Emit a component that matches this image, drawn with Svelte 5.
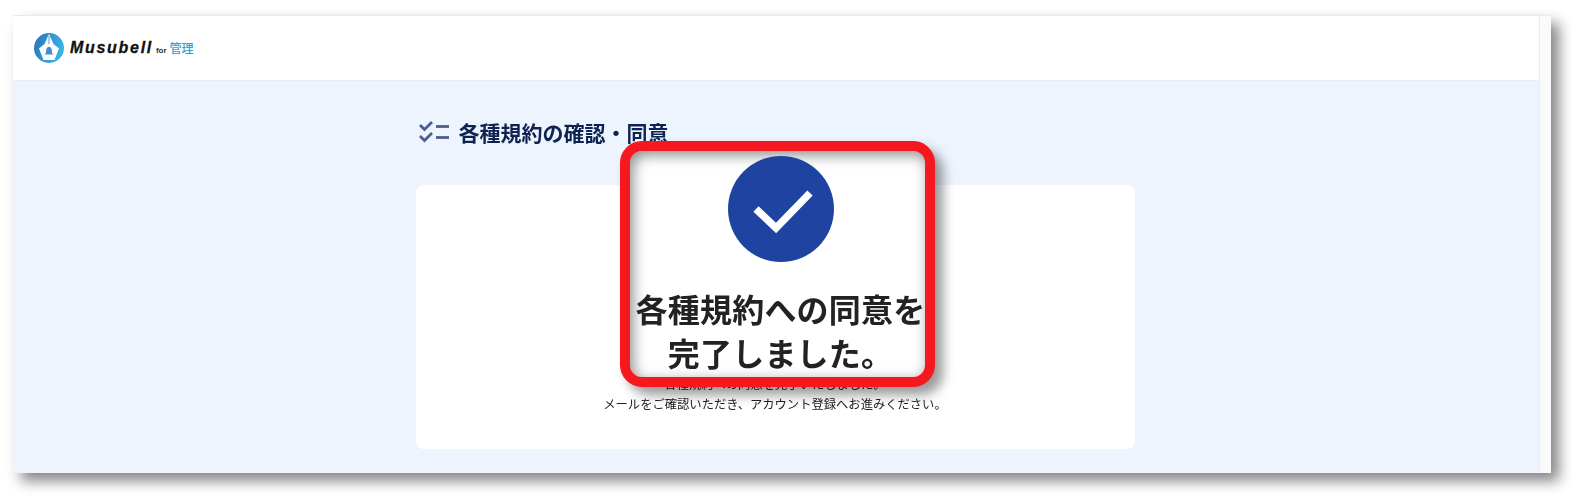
<script>
  const title = '各種規約の確認・同意';
</script>

<div class="stage">
  <div class="window">
    <div class="page">
      <header class="topbar">
        <svg class="logo" width="30" height="30" viewBox="0 0 30 30" aria-hidden="true">
          <defs>
            <linearGradient id="lg" x1="0" y1="0" x2="1" y2="0.3">
              <stop offset="0" stop-color="#2a72b8" />
              <stop offset="1" stop-color="#35b4e6" />
            </linearGradient>
          </defs>
          <circle cx="15" cy="15" r="15" fill="url(#lg)" />
          <path d="M15 1 L19.5 11 L25 15.5 L20.5 27 L9.5 27 L5 15.5 L10.5 11 Z" fill="#fff" />
          <path d="M15 3 L15 11" stroke="#3a8fd0" stroke-width="0.9" />
          <path d="M12 20 C12 15.5 13 14 15 14 C17 14 18 15.5 18 20 L19.5 21.5 L10.5 21.5 Z" fill="#3a8fd0" />
        </svg>
        <span class="brand">Musubell</span><span class="for">for</span><span class="kanri">管理</span>
      </header>
      <main class="content">
        <div class="column">
          <h1 class="title">
            <svg width="31" height="24" viewBox="0 0 31 24" aria-hidden="true">
              <g fill="none" stroke="#4a5d8c" stroke-width="2.8">
                <path d="M1 5 L5.5 9.5 L13 2" />
                <path d="M1 16 L5.5 20.5 L13 13" />
                <path d="M17 6.5 H30" />
                <path d="M17 17.5 H30" />
              </g>
            </svg>
            <span>{title}</span>
          </h1>
          <section class="card">
            <p>各種規約への同意を完了いたしました。</p>
            <p>メールをご確認いただき、アカウント登録へお進みください。</p>
          </section>
        </div>
      </main>
    </div>
    <div class="scrollbar"></div>
  </div>

  <div class="callout">
    <svg class="badge" width="106" height="106" viewBox="0 0 106 106" aria-hidden="true">
      <circle cx="53" cy="53" r="53" fill="#1f43a0" />
      <path d="M28 53 L48 72 L82 37" fill="none" stroke="#fff" stroke-width="7.5" />
    </svg>
    <div class="callout-text">各種規約への同意を<br />完了しました。</div>
  </div>
</div>

<style>
  :global(body) {
    margin: 0;
    background: #fff;
    font-family: "Noto Sans CJK JP", "Noto Sans", sans-serif;
  }
  .stage {
    position: relative;
    width: 1585px;
    height: 504px;
    overflow: hidden;
    padding: 15px 34px 31px 13px;
    box-sizing: border-box;
    filter: blur(0.4px);
  }
  .window {
    display: flex;
    height: 100%;
    box-shadow: 8px 8px 13px rgba(0, 0, 0, 0.48);
    border-top: 1px solid #eaeaea;
    box-sizing: border-box;
    background: #fafafa;
  }
  .page {
    flex: 1;
    display: flex;
    flex-direction: column;
    min-width: 0;
  }
  .scrollbar {
    width: 12px;
    background: #fafafa;
    border-left: 1px solid #eaeaea;
    box-sizing: border-box;
  }
  .topbar {
    height: 65px;
    flex: none;
    box-sizing: border-box;
    background: #fff;
    display: flex;
    align-items: center;
    padding-left: 21px;
    border-bottom: 1px solid #e8eef5;
  }
  .logo { margin-right: 6px; }
  .brand {
    font-family: "Liberation Sans", sans-serif;
    font-style: italic;
    font-weight: 700;
    font-size: 16px;
    letter-spacing: 1.7px;
    color: #111;
    -webkit-text-stroke: 0.3px #111;
  }
  .for {
    font-family: "Liberation Sans", sans-serif;
    font-size: 8px;
    font-weight: 700;
    color: #333;
    margin: 4px 3px 0 3px;
  }
  .kanri {
    font-size: 12px;
    font-weight: 500;
    color: #2f9fdc;
    margin-bottom: 2px;
  }
  .content {
    flex: 1;
    background: #edf4fe;
    display: flex;
    justify-content: center;
    padding-right: 2px;
  }
  .column {
    width: 719px;
    display: flex;
    flex-direction: column;
  }
  .title {
    margin: 35px 0 0;
    height: 32px;
    display: flex;
    align-items: center;
    gap: 9px;
    padding-left: 3px;
    font-size: 21px;
    font-weight: 700;
    color: #0f2350;
    line-height: 32px;
  }
  .card {
    margin-top: 37px;
    height: 264px;
    background: #fff;
    border-radius: 8px;
    box-sizing: border-box;
    padding-top: 189px;
    text-align: center;
    font-size: 12.3px;
    line-height: 20px;
    color: #222;
  }
  .card p { margin: 0; }
  .callout {
    position: absolute;
    left: 620px;
    top: 141px;
    width: 315px;
    height: 246px;
    box-sizing: border-box;
    border: 10px solid #f5191f;
    border-radius: 22px;
    background: #fff;
    box-shadow: 8px 8px 12px rgba(0, 0, 0, 0.4), inset 3px 4px 14px rgba(0, 0, 0, 0.45);
    display: flex;
    flex-direction: column;
    align-items: center;
    padding-left: 6px;
  }
  .badge { margin-top: 5px; flex: none; }
  .callout-text {
    margin-top: 24px;
    font-size: 32px;
    font-weight: 700;
    letter-spacing: 0.2px;
    line-height: 44px;
    color: #222;
    text-align: center;
    white-space: nowrap;
  }
</style>
